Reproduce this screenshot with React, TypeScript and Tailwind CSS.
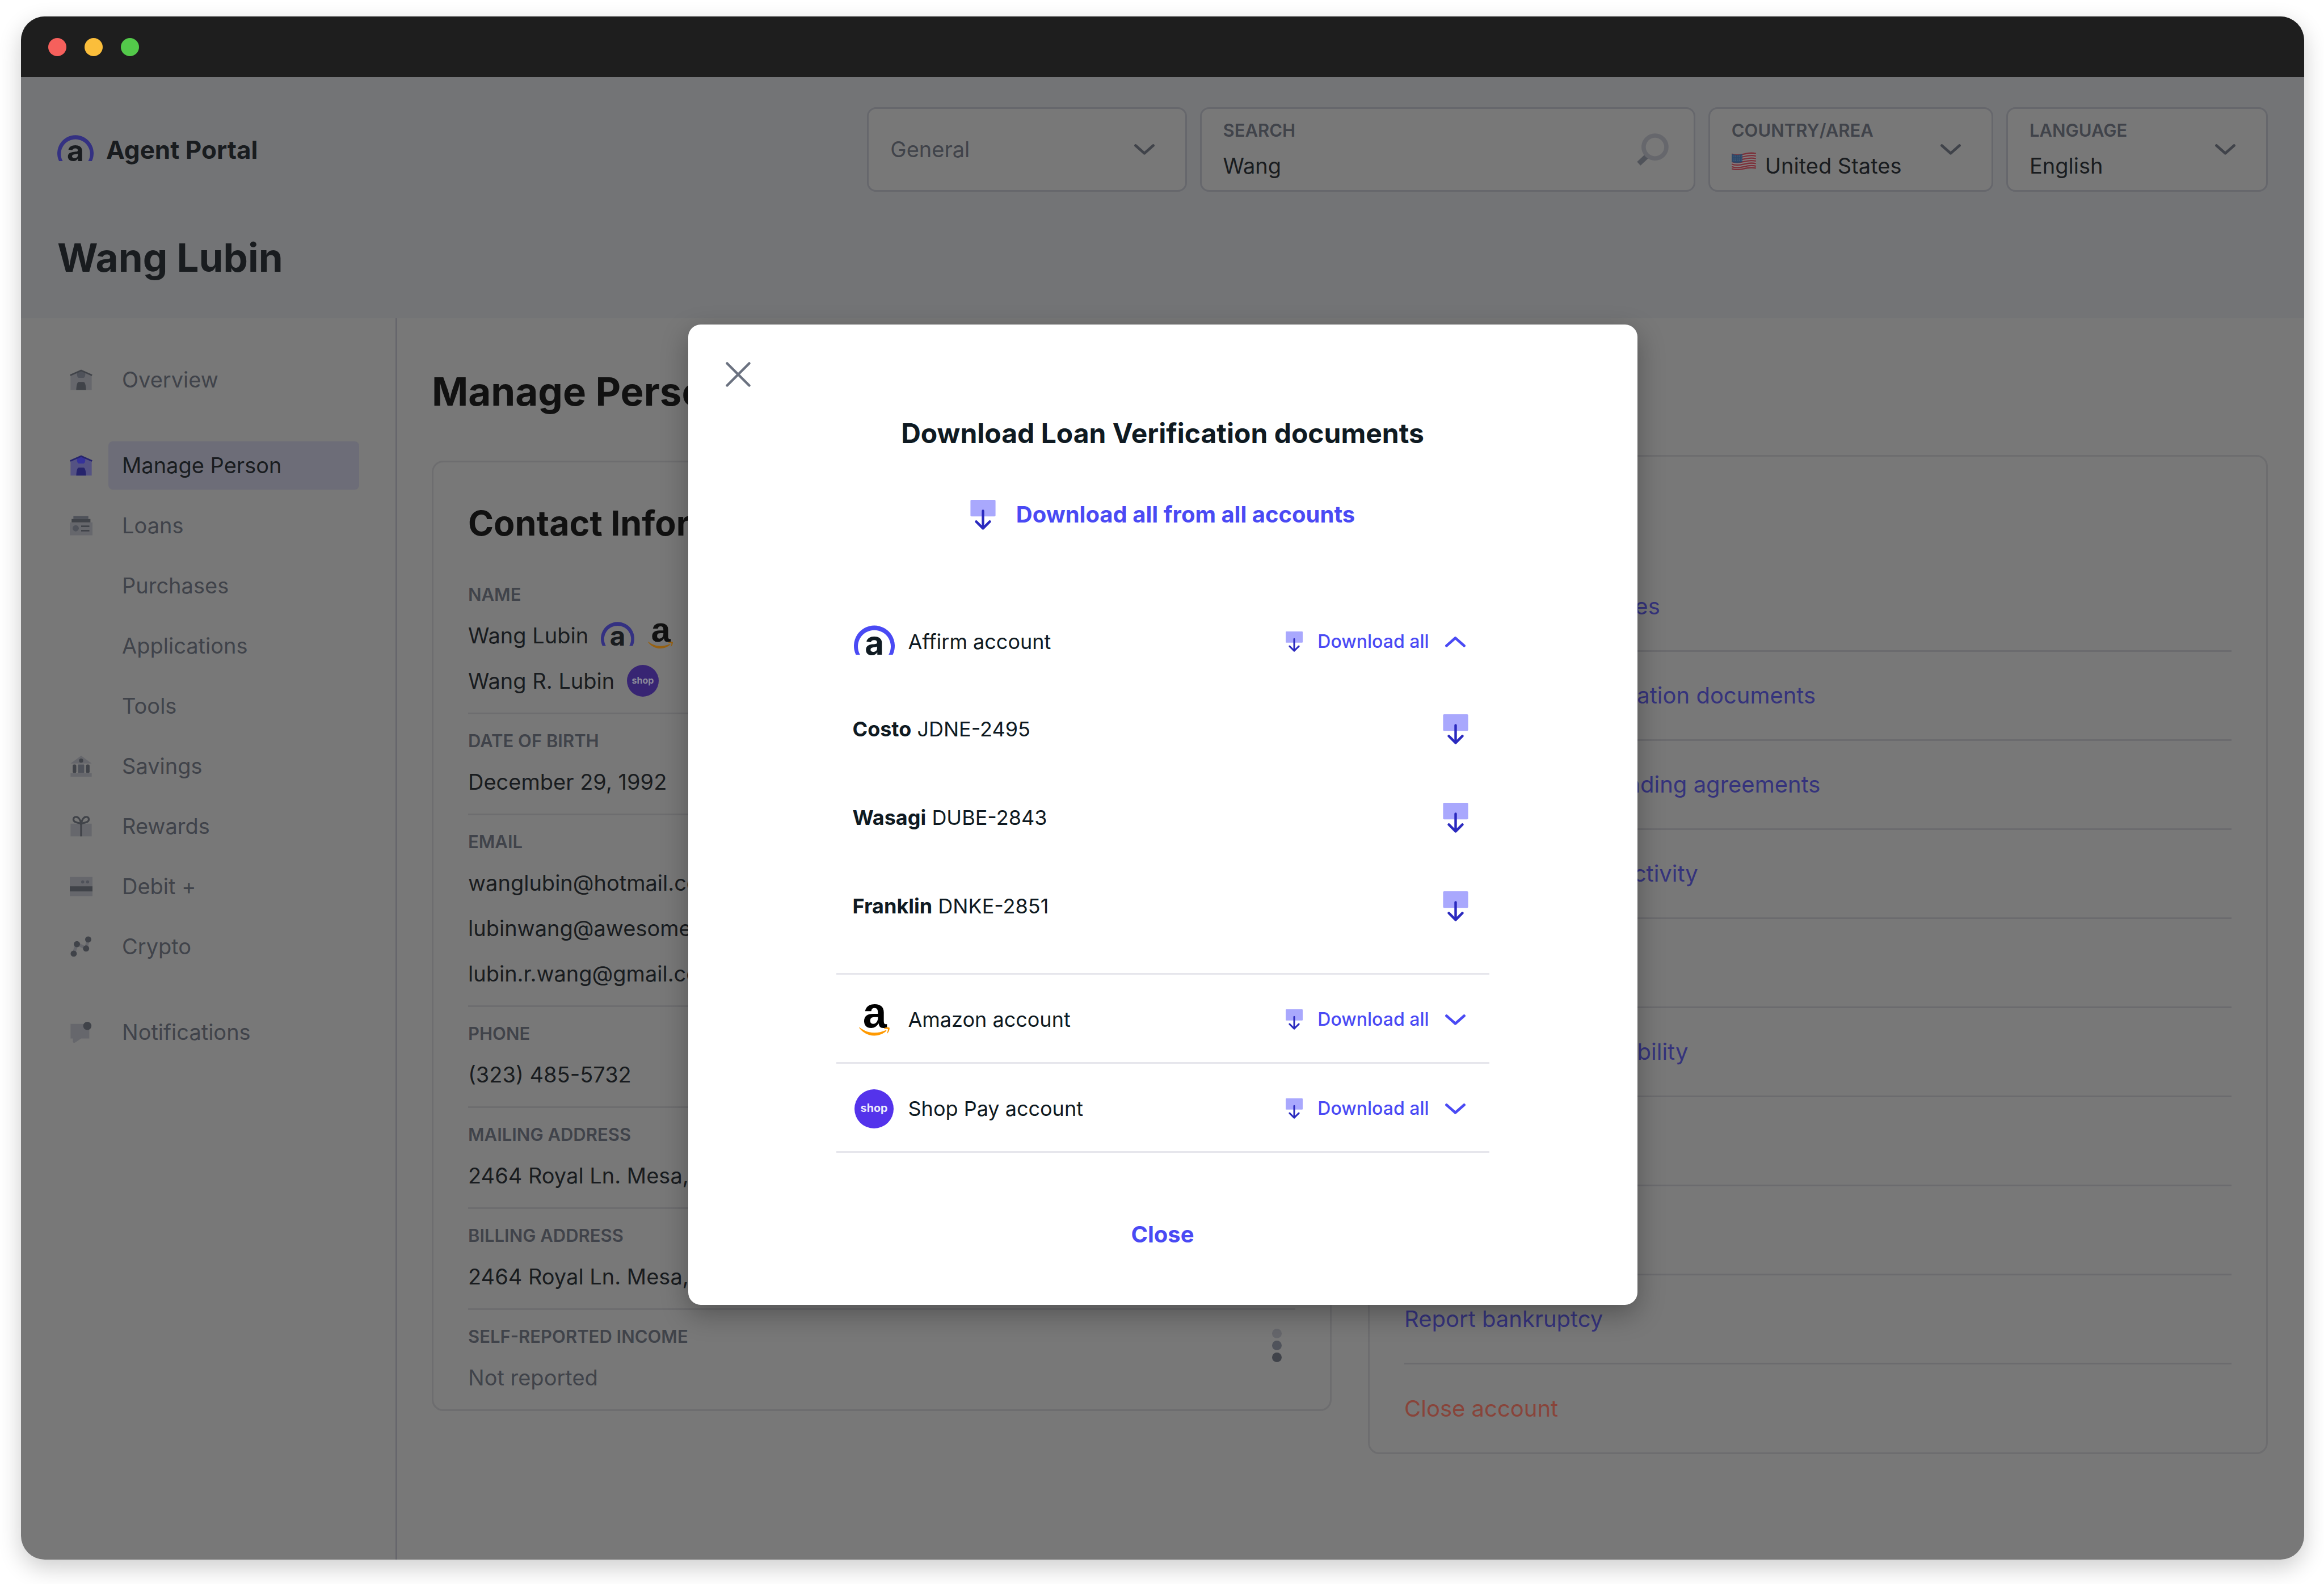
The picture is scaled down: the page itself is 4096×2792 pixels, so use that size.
import React from "react";

type LogoProps = { className: string; muted?: boolean };

function AffirmLogo({ className, muted }: LogoProps) {
  return (
    <svg viewBox="0 0 72 60" className={`${className} overflow-visible`} aria-label="Affirm" role="img">
      <path d="M3.500 53A36 36 0 1 1 68.500 53H61.200A29 29 0 1 0 10.800 53Z" fill={muted ? "#343182" : "#4a4af4"} />
      <text x="36" y="52.500" textAnchor="middle" fontFamily="Inter, sans-serif" fontWeight="700" fontSize="58" fill={muted ? "#191c1f" : "#0f1a22"}>
        a
      </text>
    </svg>
  );
}

function AmazonLogo({ className, muted }: LogoProps) {
  return (
    <svg viewBox="0 0 60 63" className={`${className} overflow-visible`} aria-label="Amazon" role="img">
      <text x="31" y="47" textAnchor="middle" fontFamily="Liberation Sans, sans-serif" fontWeight="700" fontSize="84" fill={muted ? "#111111" : "#000000"}>
        a
      </text>
      <g fill={muted ? "#976111" : "#ff9900"}>
        <path d="M.3 47.6c-.5-.7.3-1.3 1-.8C10 53.500 19.500 57 30 57c8 0 15.500-1.800 22-4.800 1.300-.6 2.300.8 1.200 1.700C47 59.500 38.500 62.700 30 62.700 18 62.700 7.500 57 .3 47.600z" />
        <path d="M49.200 48.300c2.800-2.200 9.500-2.200 10.400-1 .9 1.300-.3 7.300-3.900 10.700-.6.500-1.100.2-.9-.4 1-2.400 2.300-6.500 1.600-7.500-.7-.9-4.600-.9-6.800-.6-.8.1-1-.7-.4-1.200z" />
      </g>
    </svg>
  );
}

function ShopLogo({ className, muted }: LogoProps) {
  return (
    <svg viewBox="0 0 77 77" className={className} aria-label="Shop Pay" role="img">
      <circle cx="38.5" cy="38.5" r="38.500" fill={muted ? "#382573" : "#5433eb"} />
      <text x="38.5" y="45" textAnchor="middle" fontFamily="Inter, sans-serif" fontWeight="700" fontSize="22" fill={muted ? "#8d8b9a" : "#eceafb"}>
        shop
      </text>
    </svg>
  );
}

function DownloadIcon({ className }: { className: string }) {
  return (
    <svg viewBox="0 0 50 60" className={className} aria-hidden="true">
      <rect width="50" height="33" rx="2" fill="#a9a8fd" />
      <path d="M25 22v34M11.500 43.500 25 57l13.500-13.500" fill="none" stroke="#2b2abf" strokeWidth="5" strokeLinecap="round" strokeLinejoin="round" />
    </svg>
  );
}

function Chevron({ className, up }: { className: string; up?: boolean }) {
  return (
    <svg viewBox="0 0 44 24" className={className} aria-hidden="true">
      <path d={up ? "M4 20 22 4l18 16" : "M4 4l18 16L40 4"} fill="none" stroke="currentColor" strokeWidth="5.500" strokeLinecap="round" strokeLinejoin="round" />
    </svg>
  );
}

function SearchIcon() {
  return (
    <svg viewBox="0 0 65 65" className="size-[58px] shrink-0" aria-hidden="true">
      <path d="M23 44 6 60" stroke="#50535a" strokeWidth="10" />
      <circle cx="38" cy="27" r="22.500" fill="none" stroke="#66676c" strokeWidth="8.500" />
    </svg>
  );
}

function FlagIcon() {
  const wave = (y: number) => `M0 ${y}C8 ${y + 3} 16 ${y + 2} 24 ${y}S40 ${y - 3} 48 ${y - 1}`;
  return (
    <svg viewBox="0 0 48 36" className="h-8 w-[43px] shrink-0" aria-hidden="true">
      <path d="M0 3c8 3 16 2 24 0s16-3 24-1v31c-8-2-16-1-24 1s-16 2-24 0z" fill="#837f80" />
      {[4, 9, 14, 19, 24, 29, 33].map((y) => (
        <path key={y} d={wave(y)} fill="none" stroke="#7b3039" strokeWidth="2.600" />
      ))}
      <path d="M0 4c7 2 14 2 21 0v16C14 22 7 22 0 20z" fill="#2c4768" />
      <path d="M2 8h18M2 12h18M2 16h18" stroke="#5b6f88" strokeWidth="1.500" strokeDasharray="1.500 2.500" />
    </svg>
  );
}

const L = "#66676c";
const M = "#4f525a";
const D = "#404349";

function HouseIcon({ active }: { active?: boolean }) {
  const light = active ? "#545283" : L;
  const mid = active ? "#35329a" : M;
  const dark = active ? "#26246c" : D;
  return (
    <>
      <path d="M1.500 11 22 2l20.500 9v29h-41z" fill={light} />
      <path d="M14 7l8-4 8 4c.5 5-1 9-3 9.500H17C15 16 13.500 12 14 7z" fill={mid} />
      <path d="M12.500 40c.3-9 2-15.500 5-15.500h9c3 0 4.700 6.500 5 15.500z" fill={dark} />
      <path d="M.8 11.500 22 2.200l21.200 9.300" fill="none" stroke={dark} strokeWidth="3" />
    </>
  );
}

const icons: Record<string, React.ReactNode> = {
  house: <HouseIcon />,
  houseActive: <HouseIcon active />,
  loans: (
    <>
      <path d="M0 14h44v25H0z" fill={L} />
      <path d="M3.500 7.500H40V14H3.500z" fill={D} />
      <path d="M7 2h29v5.500H7z" fill={M} />
      <circle cx="11.500" cy="25.500" r="6" fill={M} />
      <path d="M22 21.500h16M22 30h16" stroke={D} strokeWidth="3" />
    </>
  ),
  savings: (
    <>
      <path d="M1.500 15 22 0l20.500 15zM1.500 34h41v7h-41z" fill={L} />
      <circle cx="22" cy="9.500" r="4" fill={D} />
      <rect x="5.600" y="17" width="7" height="16.500" rx="2.500" fill={D} />
      <rect x="31.400" y="17" width="7" height="16.500" rx="2.500" fill={D} />
      <rect x="16" y="17" width="12" height="16.500" rx="1" fill={M} />
    </>
  ),
  rewards: (
    <>
      <path d="M1.500 15h41v25h-41z" fill={L} />
      <path d="M22 40V15M22 15C20 6 16 1.500 11 2.200 6 3 6 9.500 10 11.500c3.500 1.700 8 2.500 12 3.500zM22 15c2-9 6-13.500 11-12.800 5 .8 5 7.300 1 9.300-3.500 1.700-8 2.500-12 3.500z" fill="none" stroke={D} strokeWidth="3.600" />
    </>
  ),
  debit: (
    <>
      <path d="M0 2h44v37H0z" fill={L} />
      <path d="M0 20h44v10H0z" fill={D} />
      <circle cx="25" cy="11.500" r="3" fill={M} />
      <circle cx="34.500" cy="11.500" r="3" fill={M} />
    </>
  ),
  crypto: (
    <>
      <path d="m7.600 34 6.200-19 18 8.500 4-18" fill="none" stroke={L} strokeWidth="6" />
      <g fill={D}>
        <circle cx="7.600" cy="34" r="6" />
        <circle cx="13.800" cy="15.500" r="6" />
        <circle cx="31.600" cy="24" r="6" />
        <circle cx="35.700" cy="6.500" r="6" />
      </g>
    </>
  ),
  notifications: (
    <>
      <path d="M1.500 4h36.300v28.500H22L10 40.500c-2 1-4-.5-4-2v-6H1.500z" fill={L} />
      <circle cx="34" cy="8" r="8" fill={D} />
    </>
  ),
};

const navGroups: { label: string; icon?: string; active?: boolean }[][] = [
  [{ label: "Overview", icon: "house" }],
  [
    { label: "Manage Person", icon: "houseActive", active: true },
    { label: "Loans", icon: "loans" },
    { label: "Purchases" },
    { label: "Applications" },
    { label: "Tools" },
    { label: "Savings", icon: "savings" },
    { label: "Rewards", icon: "rewards" },
    { label: "Debit +", icon: "debit" },
    { label: "Crypto", icon: "crypto" },
  ],
  [{ label: "Notifications", icon: "notifications" }],
];

const actions = [
  "Show account balances",
  "Download loan verification documents",
  "Download truth-in-lending agreements",
  "View latest account activity",
  "Add a note",
  "Review purchase eligibility",
  "Reset password",
  "Report fraud",
  "Report bankruptcy",
];

const documents = [
  ["Costo", "JDNE-2495"],
  ["Wasagi", "DUBE-2843"],
  ["Franklin", "DNKE-2851"],
];

const fieldBox = "flex h-[149px] min-w-0 items-center rounded-2xl border-[3px] border-[#66676c] bg-[#787878] pl-[38px]";
const fieldLabel = "block text-[31px] leading-9 font-semibold text-[#40434a]";
const fieldValue = "w-full min-w-0 appearance-none bg-transparent text-[38px] leading-[48px] text-[#191c1f] outline-none";

function Section({ label, children, first, menu }: { label: string; children: React.ReactNode; first?: boolean; menu?: boolean }) {
  return (
    <div className={first ? "flex justify-between pt-8 pb-4" : "flex justify-between border-t-[3px] border-[#6d6d6f] pt-[29px] pb-4"}>
      <div>
        <dt className="mb-3.5 text-[31px] leading-9 font-semibold text-[#40434a]">{label}</dt>
        {children}
      </div>
      {menu && (
        <button aria-label="More options" className="flex w-[66px] flex-col items-center gap-1 self-start py-1">
          <span className="size-[17px] rounded-full bg-[#66676c]" />
          <span className="size-[17px] rounded-full bg-[#50535b]" />
          <span className="size-[17px] rounded-full bg-[#40434a]" />
        </button>
      )}
    </div>
  );
}

function Value({ children, dim }: { children: React.ReactNode; dim?: boolean }) {
  return (
    <dd className={dim ? "flex h-20 items-center text-[38px] text-[#40434a]" : "flex h-20 items-center text-[38px] whitespace-nowrap text-[#191c1f]"}>
      {children}
    </dd>
  );
}

function AccountHeader({ logo, name, open }: { logo: React.ReactNode; name: string; open?: boolean }) {
  return (
    <div className="flex h-[154px] items-center pt-1 pr-[37px] pl-[29px]">
      <span className="mr-[22px] flex w-[76px] justify-center">{logo}</span>
      <span className="flex-1 text-[36px] text-[#0f1a22]">{name}</span>
      <button className="flex items-center gap-[26px] text-[32px] font-medium text-[#4a4af4]">
        <DownloadIcon className="h-9 w-[30px]" />
        Download all
      </button>
      <button aria-label={open ? `Collapse ${name}` : `Expand ${name}`} className="ml-6 flex w-[45px] justify-center text-[#4a4af4]">
        <Chevron up={open} className="w-[38px]" />
      </button>
    </div>
  );
}

function Header() {
  return (
    <header className="bg-[#737476] px-16 pt-[53px] pb-[65px]">
      <div className="grid grid-cols-[1427fr_2468fr] items-center">
        <div className="flex items-center gap-[22px]">
          <AffirmLogo muted className="w-16" />
          <span className="text-[44px] font-bold text-[#191c1f]">Agent Portal</span>
        </div>
        <div className="grid grid-cols-[563fr_873fr_502fr_461fr] gap-[23px]">
          <div className={`${fieldBox} pr-[53px]`}>
            <select aria-label="Category" className="min-w-0 flex-1 appearance-none bg-transparent text-[38px] text-[#40434a] outline-none">
              <option>General</option>
            </select>
            <Chevron className="w-[38px] shrink-0 text-[#40434a]" />
          </div>
          <div className={`${fieldBox} pr-11`}>
            <div className="min-w-0 flex-1">
              <label htmlFor="search" className={fieldLabel}>SEARCH</label>
              <input id="search" defaultValue="Wang" className={`${fieldValue} mt-5`} />
            </div>
            <SearchIcon />
          </div>
          <div className={`${fieldBox} pr-[53px]`}>
            <div className="min-w-0 flex-1">
              <label htmlFor="country" className={fieldLabel}>COUNTRY/AREA</label>
              <div className="mt-5 flex gap-4">
                <FlagIcon />
                <select id="country" className={fieldValue}>
                  <option>United States</option>
                </select>
              </div>
            </div>
            <Chevron className="w-[38px] shrink-0 text-[#40434a]" />
          </div>
          <div className={`${fieldBox} pr-[53px]`}>
            <div className="min-w-0 flex-1">
              <label htmlFor="language" className={fieldLabel}>LANGUAGE</label>
              <select id="language" className={`${fieldValue} mt-5`}>
                <option>English</option>
              </select>
            </div>
            <Chevron className="w-[38px] shrink-0 text-[#40434a]" />
          </div>
        </div>
      </div>
      <h1 className="mt-[74px] text-[69px] leading-[84px] font-bold text-[#191c1f]">Wang Lubin</h1>
    </header>
  );
}

function Sidebar() {
  return (
    <nav className="flex w-[663px] shrink-0 flex-col gap-[66px] border-r-[3px] border-[#66666c] pt-[66px] pr-16 pl-[86px]">
      {navGroups.map((group, i) => (
        <ul key={i} className="flex flex-col gap-[21px]">
          {group.map((item) => (
            <li key={item.label}>
              <a href="#" className="flex items-center gap-7">
                <svg viewBox="0 0 44 41" className="w-10 shrink-0" aria-hidden="true">
                  {item.icon && icons[item.icon]}
                </svg>
                <span
                  className={
                    item.active
                      ? "flex h-[85px] flex-1 items-center rounded-lg bg-[#6d6d78] px-6 text-[38px] text-[#191c1f]"
                      : "flex h-[85px] flex-1 items-center px-6 text-[38px] text-[#40434a]"
                  }
                >
                  {item.label}
                </span>
              </a>
            </li>
          ))}
        </ul>
      ))}
    </nav>
  );
}

function ContactCard() {
  return (
    <section className="rounded-[20px] border-[3px] border-[#6d6d6f] px-[61px] pt-[70px]">
      <h3 className="mb-[39px] text-[61px] leading-[74px] font-bold text-[#111111]">Contact Information</h3>
      <dl>
        <Section label="NAME" first>
          <Value>
            Wang Lubin
            <AffirmLogo muted className="mr-6 ml-[22px] w-[59px]" />
            <AmazonLogo muted className="w-11" />
          </Value>
          <Value>
            Wang R. Lubin
            <ShopLogo muted className="ml-[22px] size-14" />
          </Value>
        </Section>
        <Section label="DATE OF BIRTH">
          <Value>December 29, 1992</Value>
        </Section>
        <Section label="EMAIL">
          <Value>wanglubin@hotmail.com</Value>
          <Value>lubinwang@awesome.com</Value>
          <Value>lubin.r.wang@gmail.com</Value>
        </Section>
        <Section label="PHONE">
          <Value>(323) 485-5732</Value>
        </Section>
        <Section label="MAILING ADDRESS">
          <Value>2464 Royal Ln. Mesa, New Jersey</Value>
        </Section>
        <Section label="BILLING ADDRESS">
          <Value>2464 Royal Ln. Mesa, New Jersey</Value>
        </Section>
        <Section label="SELF-REPORTED INCOME" menu>
          <Value dim>Not reported</Value>
        </Section>
      </dl>
    </section>
  );
}

function ActionsCard() {
  return (
    <section className="rounded-[20px] border-[3px] border-[#6d6d6f] px-[61px] pt-[70px]">
      <h3 className="mb-[43px] text-[61px] leading-[74px] font-bold text-[#111111]">Actions</h3>
      <ul className="text-[40px]">
        {actions.map((a) => (
          <li key={a} className="flex h-[157px] items-center border-b-[3px] border-[#6b6b6e]">
            <a href="#" className="text-[#35337c]">{a}</a>
          </li>
        ))}
        <li className="flex h-[155px] items-center">
          <a href="#" className="text-[#88443a]">Close account</a>
        </li>
      </ul>
    </section>
  );
}

function DownloadDialog() {
  return (
    <div role="dialog" aria-modal="true" aria-labelledby="dialog-title" className="w-[1673px] rounded-[22px] bg-white pt-16 pb-[94px] shadow-[0_16px_48px_rgba(0,0,0,0.3)]">
      <button aria-label="Close dialog" className="ml-16 block">
        <svg viewBox="0 0 48 48" className="size-12" aria-hidden="true">
          <path d="M4.500 4.500l39 39M43.500 4.500l-39 39" stroke="#6b7280" strokeWidth="4.500" strokeLinecap="round" />
        </svg>
      </button>
      <h2 id="dialog-title" className="mt-[50px] text-center text-[48px] leading-[60px] font-bold text-[#0f1a22]">
        Download Loan Verification documents
      </h2>
      <button className="mx-auto mt-[83px] flex h-[60px] items-center gap-9 text-[40px] font-bold text-[#4a4af4]">
        <DownloadIcon className="h-[53px] w-[45px]" />
        Download all from all accounts
      </button>
      <div className="mx-[261px] mt-[115px]">
        <div className="border-b-[3px] border-[#e6e6ec] pb-10">
          <AccountHeader open name="Affirm account" logo={<AffirmLogo className="w-[72px]" />} />
          <ul className="pt-px">
            {documents.map(([store, id]) => (
              <li key={id} className="flex h-[156px] items-center justify-between pr-[37px] pl-[29px] text-[36px] text-[#0f1a22]">
                <span>
                  <b className="font-bold">{store}</b> {id}
                </span>
                <button aria-label={`Download ${store} ${id}`}>
                  <DownloadIcon className="h-[53px] w-[45px]" />
                </button>
              </li>
            ))}
          </ul>
        </div>
        <div className="border-b-[3px] border-[#e6e6ec]">
          <AccountHeader name="Amazon account" logo={<AmazonLogo className="w-[54px]" />} />
        </div>
        <div className="border-b-[3px] border-[#e6e6ec]">
          <AccountHeader name="Shop Pay account" logo={<ShopLogo className="size-[69px]" />} />
        </div>
      </div>
      <button className="mx-auto mt-[114px] block text-[40px] leading-[60px] font-bold text-[#4a4af4]">Close</button>
    </div>
  );
}

export default function App() {
  return (
    <div className="flex min-h-screen bg-white pt-[29px] pr-[35px] pb-[43px] pl-[37px] font-['Inter',sans-serif]">
      <div className="flex flex-1 flex-col overflow-hidden rounded-[42px] bg-[#787878] shadow-[0_14px_40px_rgba(0,0,0,0.2)]">
        <div className="flex h-[107px] items-center gap-8 bg-[#1e1e1e] px-12">
          <span className="size-8 rounded-full bg-[#f6605c]" />
          <span className="size-8 rounded-full bg-[#fbbe3b]" />
          <span className="size-8 rounded-full bg-[#53c94a]" />
        </div>
        <div className="relative flex flex-1 flex-col">
          <Header />
          <div className="flex flex-1">
            <Sidebar />
            <main className="grid flex-1 grid-cols-2 items-start gap-16 pr-16 pb-32 pl-[61px]">
              <div className="pt-[87px]">
                <h2 className="mb-20 text-[69px] leading-[84px] font-bold text-[#111111]">Manage Person</h2>
                <ContactCard />
              </div>
              <div className="pt-[241px]">
                <ActionsCard />
              </div>
            </main>
          </div>
          <div className="absolute inset-0 flex items-start justify-center pt-[436px]">
            <DownloadDialog />
          </div>
        </div>
      </div>
    </div>
  );
}
